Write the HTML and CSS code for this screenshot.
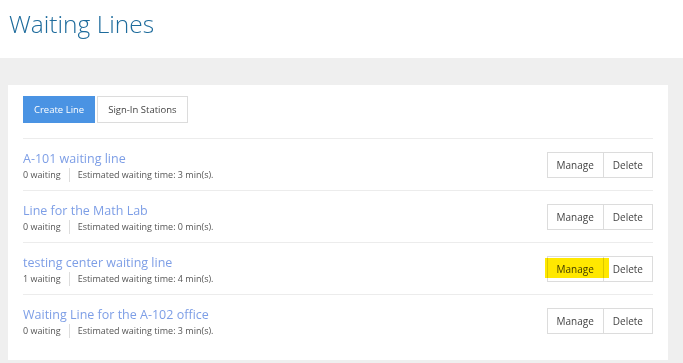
FILE: index.html
```html
<!DOCTYPE html>
<html lang="en">
<head>
  <meta charset="UTF-8" />
  <meta name="viewport" content="width=device-width, initial-scale=1.0"/>
  <title>Waiting Lines</title>
  <link rel="stylesheet" href="styles.css">
</head>
<body>
  <div class="header">
    <h1>Waiting Lines</h1>
  </div>

  <div class="main">
    <div class="card">
      <div class="toolbar">
        <button class="btn primary">Create Line</button>
        <button class="btn">Sign-In Stations</button>
      </div>

      <div class="line">
        <div class="info">
          <a href="#" class="name">A-101 waiting line</a>
          <div class="meta"><span>0 waiting</span><span class="sep">Estimated waiting time: 3 min(s).</span></div>
        </div>
        <div class="actions">
          <button class="btn">Manage</button><button class="btn">Delete</button>
        </div>
      </div>

      <div class="line">
        <div class="info">
          <a href="#" class="name">Line for the Math Lab</a>
          <div class="meta"><span>0 waiting</span><span class="sep">Estimated waiting time: 0 min(s).</span></div>
        </div>
        <div class="actions">
          <button class="btn">Manage</button><button class="btn">Delete</button>
        </div>
      </div>

      <div class="line">
        <div class="info">
          <a href="#" class="name">testing center waiting line</a>
          <div class="meta"><span>1 waiting</span><span class="sep">Estimated waiting time: 4 min(s).</span></div>
        </div>
        <div class="actions">
          <button class="btn marked">Manage</button><button class="btn">Delete</button>
        </div>
      </div>

      <div class="line">
        <div class="info">
          <a href="#" class="name">Waiting Line for the A-102 office</a>
          <div class="meta"><span>0 waiting</span><span class="sep">Estimated waiting time: 3 min(s).</span></div>
        </div>
        <div class="actions">
          <button class="btn">Manage</button><button class="btn">Delete</button>
        </div>
      </div>
    </div>
  </div>
</body>
</html>
```

FILE: styles.css
```css
body {
  margin: 0;
  font-family: 'Open Sans', sans-serif;
  background-color: #efefef;
  color: #555;
}

.header {
  background-color: #fff;
  height: 58px;
  padding: 0 9px;
  box-sizing: border-box;
}

.header h1 {
  margin: 0;
  padding-top: 4px;
  font-size: 24.5px;
  font-weight: 300;
  line-height: 40px;
  color: #1d6b9c;
}

.main {
  padding: 27px 15px 3px 8px;
}

.card {
  background-color: #fff;
  padding: 11px 15px 14px 15px;
}

.toolbar {
  display: flex;
  gap: 2px;
  padding-bottom: 15px;
}

.btn {
  font-family: 'Open Sans', sans-serif;
  font-size: 9.5px;
  background-color: #fff;
  color: #444;
  border: 1px solid #dcdcdc;
  height: 27px;
  padding: 0 10px;
  cursor: pointer;
}

.btn.primary {
  background-color: #4a93e3;
  border-color: #4a93e3;
  color: #fff;
}

.line {
  display: flex;
  align-items: center;
  justify-content: space-between;
  border-top: 1px solid #ececec;
  height: 51px;
}

.info {
  padding-top: 3px;
}

.name {
  display: block;
  font-size: 12.5px;
  line-height: 17px;
  color: #7d9ee6;
  text-decoration: none;
}

.meta {
  display: flex;
  font-size: 9px;
  line-height: 14px;
  color: #555;
  margin-top: 1px;
}

.meta .sep {
  border-left: 1px solid #ddd;
  margin-left: 8px;
  padding-left: 8px;
}

.actions {
  display: flex;
  margin-top: 1px;
}

.actions .btn {
  font-size: 10px;
  height: 26px;
  padding: 0 9px;
}

.actions .btn + .btn {
  border-left: none;
}

.btn.marked {
  position: relative;
}

/* highlighter mark drawn over the button */
.btn.marked::after {
  content: "";
  position: absolute;
  left: -3px;
  right: -6px;
  top: 1px;
  bottom: 3px;
  background-color: #ffe800;
  mix-blend-mode: multiply;
}
```
